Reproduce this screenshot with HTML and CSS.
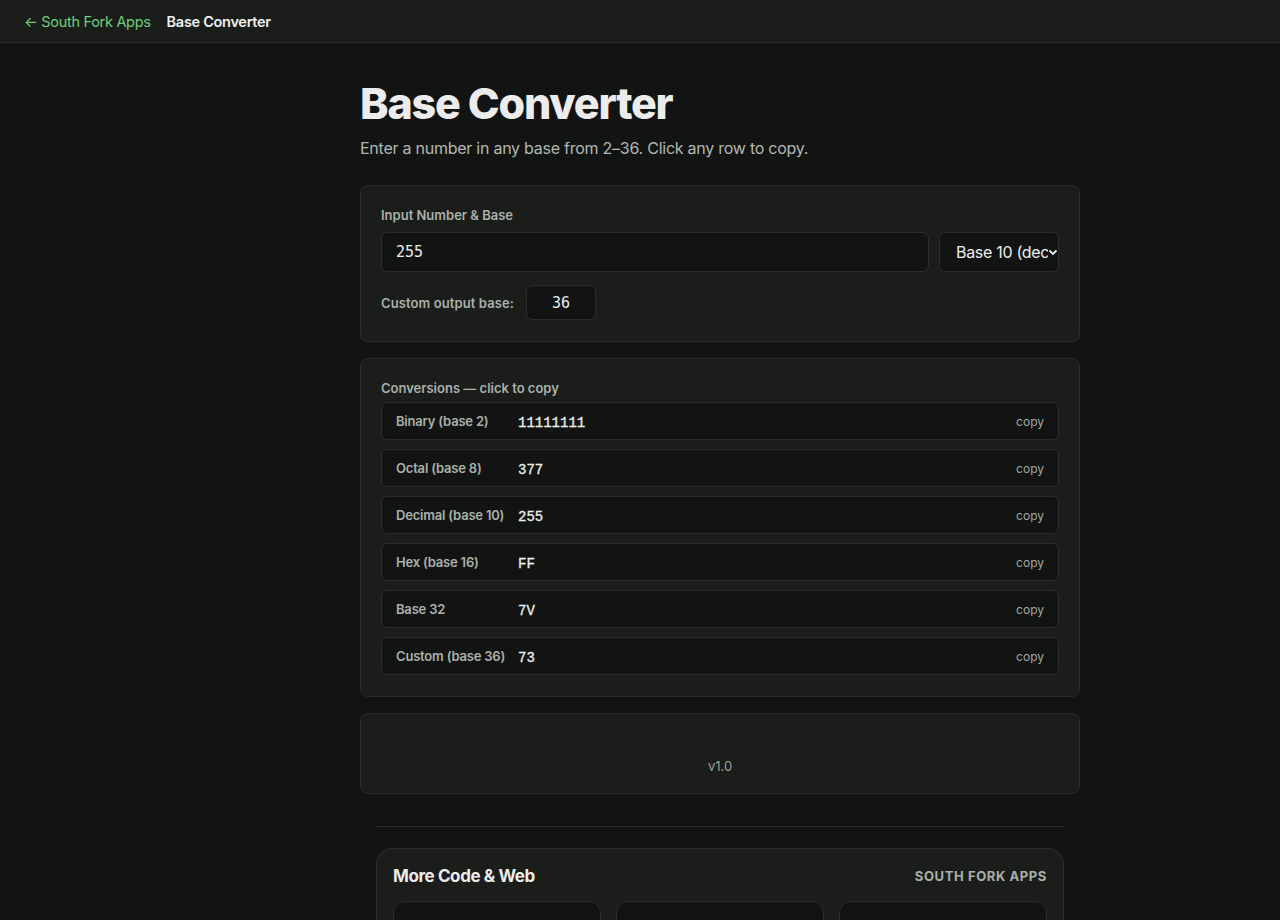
FILE: index.html
```html
<!DOCTYPE html>
<html lang="en">
<head>
<meta charset="utf-8">
<title>Base Converter</title>
<link rel="stylesheet" href="styles.css">
</head>
<body>
<header class="topbar">
  <a class="back" href="#">← South Fork Apps</a>
  <span class="crumb">Base Converter</span>
</header>
<div class="layout">
<main class="wrap">
  <h1 class="title">Base Converter</h1>
  <p class="sub">Enter a number in any base from 2–36. Click any row to copy.</p>

  <section class="card">
    <div class="label">Input Number &amp; Base</div>
    <div class="input-row">
      <input class="num" type="text" value="255">
      <div class="select"><span>Base 10 (dec</span><svg width="10" height="8" viewBox="0 0 10 8"><path d="M1.5 2.5 5 6 8.5 2.5" fill="none" stroke="#e8eae8" stroke-width="1.8"/></svg></div>
    </div>
    <div class="custom-row">
      <span class="label inline">Custom output base:</span>
      <input class="base" type="text" value="36">
    </div>
  </section>

  <section class="card">
    <div class="label">Conversions — click to copy</div>
    <div class="rows">
      <div class="row"><span class="rl">Binary (base 2)</span><span class="rv">11111111</span><span class="cp">copy</span></div>
      <div class="row"><span class="rl">Octal (base 8)</span><span class="rv">377</span><span class="cp">copy</span></div>
      <div class="row"><span class="rl">Decimal (base 10)</span><span class="rv">255</span><span class="cp">copy</span></div>
      <div class="row"><span class="rl">Hex (base 16)</span><span class="rv">FF</span><span class="cp">copy</span></div>
      <div class="row"><span class="rl">Base 32</span><span class="rv">7V</span><span class="cp">copy</span></div>
      <div class="row"><span class="rl">Custom (base 36)</span><span class="rv">73</span><span class="cp">copy</span></div>
    </div>
  </section>

  <section class="card foot">
    <span class="ver">v1.0</span>
  </section>

  <hr class="sep">

  <section class="more">
    <div class="more-head">
      <h2>More Code &amp; Web</h2>
      <span class="brand">SOUTH FORK APPS</span>
    </div>
    <div class="tiles">
      <div class="tile"></div>
      <div class="tile"></div>
      <div class="tile"></div>
    </div>
  </section>
</main>
</div>
</body>
</html>
```
FILE: styles.css
```css
* { box-sizing: border-box; }
html, body { margin: 0; padding: 0; }
body {
  background: #121413;
  color: #e8eae8;
  font-family: Inter, "Open Sans", "Liberation Sans", sans-serif;
}
.topbar {
  height: 43px;
  background: #1a1d1a;
  border-bottom: 1px solid #2a2e2a;
  display: flex;
  align-items: center;
  padding: 0 24px;
  gap: 16px;
  font-size: 14.5px;
  letter-spacing: -0.3px;
}
.back { color: #6fcf7a; text-decoration: none; }
.crumb { color: #f0f2f0; font-weight: 600; }
.layout {
  width: 880px;
  margin: 0 auto;
  padding-left: 160px;
}
.wrap {
  width: 720px;
  padding-top: 36px;
}
.title {
  margin: 0;
  font-size: 43px;
  font-weight: 800;
  letter-spacing: -1.2px;
  line-height: 1.12;
  color: #ececec;
}
.sub {
  margin: 11px 0 27px;
  font-size: 16px;
  color: #b2b8b2;
  letter-spacing: -0.25px;
}
.card {
  background: #1a1d1a;
  border: 1px solid #2a2e2b;
  border-radius: 8px;
  padding: 21px 20px 21px;
  margin-bottom: 16px;
}
.label {
  font-size: 13px;
  line-height: 16px;
  font-weight: 600;
  color: #aab0aa;
  margin-bottom: 9px;
}
.label.inline { margin: 0; letter-spacing: 0.1px; }
.input-row { display: flex; gap: 10px; }
.num, .base {
  background: #121413;
  border: 1px solid #2a2e2b;
  border-radius: 6px;
  color: #eceeec;
  font-family: "DejaVu Sans Mono", monospace;
  font-size: 15px;
  outline: none;
}
.num {
  flex: 1;
  height: 40px;
  padding: 0 14px;
}
.select {
  width: 120px;
  height: 40px;
  background: #121413;
  border: 1px solid #2a2e2b;
  border-radius: 6px;
  display: flex;
  align-items: center;
  padding: 0 0 0 16px;
  font-size: 16px;
  color: #eceeec;
  overflow: hidden;
  white-space: nowrap;
  letter-spacing: -0.3px;
}
.select span { overflow: hidden; width: 92px; flex: none; }
.select svg { flex: none; }
.custom-row {
  display: flex;
  align-items: center;
  gap: 12px;
  margin-top: 13px;
}
.base {
  width: 70px;
  height: 35px;
  text-align: center;
}
.card .label + .rows { margin-top: -3px; }
.rows { display: flex; flex-direction: column; gap: 9px; }
.row {
  height: 38px;
  background: #121413;
  border: 1px solid #2a2e2b;
  border-radius: 6px;
  display: flex;
  align-items: center;
  padding: 0 14px 0 14px;
}
.rl {
  width: 122px;
  flex: none;
  font-size: 13px;
  font-weight: 600;
  color: #aab0aa;
  letter-spacing: -0.2px;
}
.rv {
  flex: 1;
  font-family: "Liberation Mono", "Courier New", monospace;
  font-weight: 400;
  font-size: 14px;
  color: #eef0ee;
  -webkit-text-stroke: 0.3px #eef0ee;
  padding-top: 3px;
}
.cp { font-size: 12px; color: #a0a6a0; }
.foot {
  height: 81px;
  display: flex;
  justify-content: center;
  align-items: flex-end;
  padding-bottom: 19px;
}
.ver { font-size: 13px; color: #9ca29c; }
.sep {
  border: 0;
  border-top: 1px solid #2a2e2b;
  margin: 32px 16px 21px;
}
.more {
  margin: 0 16px;
  background: #1a1d1a;
  border: 1px solid #2a2e2b;
  border-radius: 16px;
  padding: 17px 16px 16px;
}
.more-head {
  display: flex;
  justify-content: space-between;
  align-items: center;
  margin-bottom: 15px;
}
.more-head h2 {
  margin: 0;
  font-size: 17px;
  font-weight: 700;
  letter-spacing: -0.4px;
  color: #ececec;
}
.brand {
  font-size: 13px;
  font-weight: 700;
  color: #aab0aa;
  letter-spacing: 0.6px;
}
.tiles { display: grid; grid-template-columns: repeat(3, 1fr); gap: 15px; }
.tile {
  height: 90px;
  background: #121413;
  border: 1px solid #2a2e2b;
  border-radius: 12px;
}
```
